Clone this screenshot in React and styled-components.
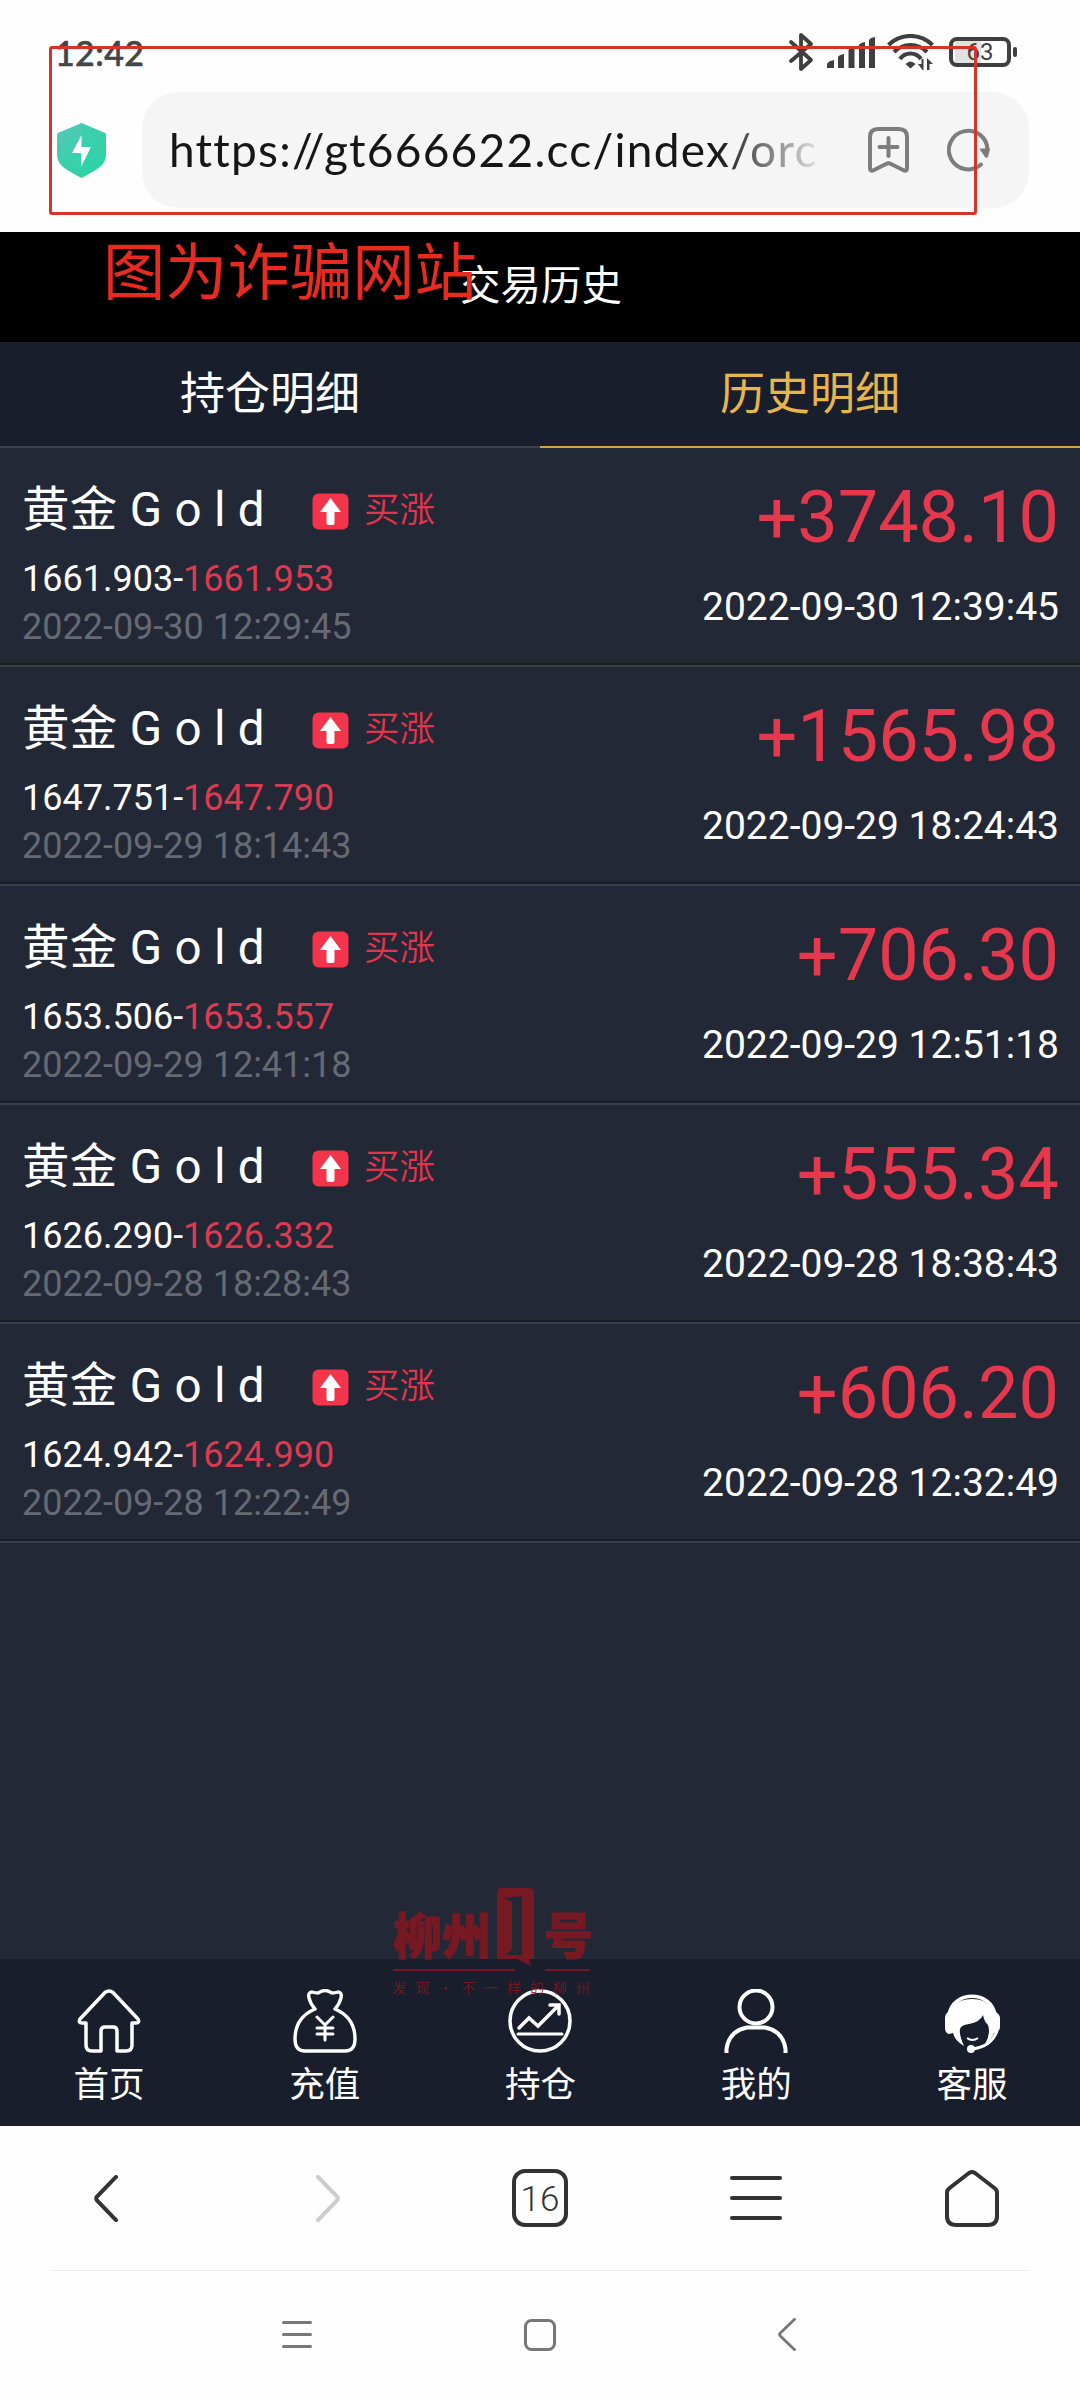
import React from "react";
import styled, { createGlobalStyle } from "styled-components";

const Global = createGlobalStyle`
  * { box-sizing: border-box; }
  body { margin: 0; background: #fefefe; }
  svg { display: block; flex: none; }
`;

const cjk = `Roboto, "Noto Sans CJK SC", sans-serif`;
const ui = `Lato, "Noto Sans CJK SC", sans-serif`;

const Screen = styled.div`
  position: relative;
  width: 1080px;
  height: 2400px;
  display: flex;
  flex-direction: column;
  overflow: hidden;
  background: #fefefe;
  font-family: ${cjk};
`;

const StatusBar = styled.div`
  height: 92px;
  padding: 12px 63px 0 55px;
  display: flex;
  justify-content: space-between;
  align-items: flex-start;
`;

const Clock = styled.span`
  font: 500 34px/82px ${ui};
  letter-spacing: 0.4px;
  color: #454545;
  -webkit-text-stroke: 0.6px #454545;
`;

const StatusIcons = styled.div`
  display: flex;
  align-items: center;
  height: 80px;
`;

const AddressRow = styled.div`
  height: 140px;
  padding: 0 51px 24px 57px;
  display: flex;
  align-items: center;
`;

const AddressBar = styled.div`
  flex: 1;
  height: 116px;
  margin-left: 36px;
  padding: 0 0 0 27px;
  border-radius: 36px;
  background: #f5f5f5;
  display: flex;
  align-items: center;
`;

const Url = styled.div`
  width: 652px;
  margin-right: 47px;
  overflow: hidden;
  white-space: nowrap;
  font: 400 46px/80px ${ui};
  letter-spacing: 1.25px;
  color: #161616;
  mask-image: linear-gradient(90deg, #000 84%, transparent 101%);
`;

const BarIcons = styled.div`
  display: flex;
  gap: 38px;
`;

const Header = styled.header`
  height: 110px;
  background: #000;
  color: #fff;
  text-align: center;
  font-size: 40.5px;
  line-height: 109px;
  padding-left: 2px;
`;

const Tabs = styled.div`
  height: 106px;
  display: flex;
  background: #191e2c;
`;

const Tab = styled.div`
  flex: 1;
  text-align: center;
  font-size: 45px;
  line-height: 106px;
  height: 106px;
  color: ${(p) => (p.$active ? "#e8b54c" : "#fff")};
  box-shadow: inset 0 -2px 0 ${(p) => (p.$active ? "#cfa648" : "#3c4047")};
`;

const List = styled.main`
  height: 1511px;
  background: #222836;
`;

const Row = styled.div`
  height: 219px;
  padding: 0 21px 0 22px;
  display: flex;
  justify-content: space-between;
  border-bottom: 2px solid #3b3d47;
  box-shadow: inset 0 -2px 0 #191c25;
`;

const Left = styled.div`
  display: flex;
  flex-direction: column;
  padding-top: 27px;
`;

const NameLine = styled.div`
  display: flex;
  align-items: center;
  height: 70px;
`;

const Name = styled.span`
  width: 290px;
  font-size: 47.5px;
  line-height: 70px;
  letter-spacing: 0.3px;
  color: #fff;
  white-space: pre;
`;

const Direction = styled.span`
  margin-left: 15px;
  font-size: 35.5px;
  font-weight: 350;
  line-height: 60px;
  color: #e3354c;
`;

const Prices = styled.div`
  margin-top: 13px;
  font-size: 36px;
  line-height: 42px;
  color: #fff;
`;

const Close = styled.span`
  color: #dc3a50;
`;

const Opened = styled.div`
  margin-top: 6px;
  font-size: 36px;
  line-height: 42px;
  color: #666a73;
`;

const Right = styled.div`
  display: flex;
  flex-direction: column;
  align-items: flex-end;
  padding-top: 28px;
`;

const Amount = styled.div`
  font-size: 72px;
  line-height: 84px;
  color: #e5384c;
`;

const Closed = styled.div`
  margin-top: 24px;
  font-size: 39px;
  line-height: 46px;
  color: #fff;
`;

const AppNav = styled.nav`
  height: 167px;
  padding: 30px 0 0 1px;
  display: grid;
  grid-template-columns: repeat(5, 1fr);
  background: #191e2c;
  border-bottom: 3px solid #1f1e2b;
`;

const NavItem = styled.div`
  display: flex;
  flex-direction: column;
  align-items: center;
  gap: 6px;
  font-size: 35.5px;
  line-height: 52px;
  color: #fff;
`;

const Toolbar = styled.div`
  height: 144px;
  display: grid;
  grid-template-columns: repeat(5, 1fr);
  place-items: center;
`;

const Nudge = styled.div`
  padding: ${(p) => p.$pad};
`;

const TabCount = styled.div`
  width: 56px;
  height: 58px;
  border: 4px solid #333;
  border-radius: 13px;
  text-align: center;
  font: 300 35px/53px Roboto, sans-serif;
  color: #333;
`;

const Rule = styled.div`
  height: 1px;
  margin: 0 51px;
  background: #e8e8e8;
`;

const SystemBar = styled.div`
  height: 129px;
  padding: 0 284px 2px 282px;
  display: flex;
  justify-content: space-between;
  align-items: center;
`;

const Frame = styled.div`
  position: absolute;
  left: 49px;
  top: 46px;
  width: 928px;
  height: 169px;
  border: 3px solid #d6332a;
  border-radius: 3px;
`;

const Caption = styled.div`
  position: absolute;
  left: 103px;
  top: 229px;
  font-size: 62.3px;
  line-height: 90px;
  color: #e92a20;
  white-space: nowrap;
`;

const Watermark = styled.div`
  position: absolute;
  left: 393px;
  top: 1887px;
  width: 197px;
  color: #8a1620;
  opacity: 0.82;
`;

const MarkLine = styled.div`
  height: 79px;
  display: flex;
  align-items: flex-end;
`;

const MarkText = styled.span`
  width: ${(p) => p.$w}px;
  margin-bottom: 8px;
  font: 900 49px/50px "Noto Sans CJK SC", sans-serif;
  white-space: nowrap;
  -webkit-text-stroke: 1px #8a1620;
`;

const MarkRules = styled.div`
  display: flex;
  justify-content: space-between;
  margin-top: 3px;
`;

const MarkRule = styled.i`
  height: 2px;
  width: ${(p) => p.$w}px;
  background: currentColor;
`;

const Motto = styled.div`
  display: flex;
  justify-content: space-between;
  margin-top: 6px;
  font: 400 14px/20px "Noto Sans CJK SC", sans-serif;
`;

const Line = (p) => (
  <g fill="none" stroke="#fff" strokeWidth="4" strokeLinecap="round" strokeLinejoin="round" {...p} />
);

const Bluetooth = () => (
  <svg width="26" height="40" viewBox="0 0 26 40">
    <path d="M3 10 23 28 13 37V3L23 12 3 29" fill="none" stroke="#3f3f3f" strokeWidth="3.8" strokeLinejoin="round" strokeLinecap="round" />
  </svg>
);

const Signal = () => (
  <svg width="48" height="31" viewBox="0 0 48 31" fill="#3f3f3f">
    <path d="M0 31v-4q1-3 7-4v8zM11 31V20q1-2 6-3v14zM21.500 31V13q1-2 6-3v21zM32 31V8q1-2 6-3v26zM42 31V3q1-2 5-3q1 0 1 1v30z" />
  </svg>
);

const Wifi = () => (
  <svg width="48" height="36" viewBox="0 0 48 36">
    <g fill="none" stroke="#3f3f3f" strokeWidth="4.200">
      <path d="M1.500 11Q11 2 23.500 2T45.500 11" />
      <path d="M7 18Q14 11 23.500 11T40 18" />
      <path d="M13 25Q17 19.500 23.500 19.500T34 25" />
    </g>
    <path d="M18.500 30q5-5 10 0l-5 4.500zM31 30h3.500v-5h2v11h-1zM40 36V24l6 6h-3.500v6z" fill="#3f3f3f" />
  </svg>
);

const BatteryBox = styled.div`
  width: 62px;
  height: 30px;
  border: 4px solid #3f3f3f;
  border-radius: 8px;
  background: linear-gradient(90deg, transparent 2px, #e2e2e2 2px, #e2e2e2 28px, transparent 28px);
  text-align: center;
  font: 400 24px/23px Roboto, sans-serif;
  color: #3f3f3f;
`;

const Nub = styled.i`
  width: 4px;
  height: 10px;
  margin-left: 2px;
  border-radius: 2px;
  background: #3f3f3f;
`;

const Space = styled.i`
  width: ${(p) => p.$w}px;
`;

const Shield = () => (
  <svg width="49" height="56" viewBox="0 0 49 56">
    <defs>
      <linearGradient id="sh" x1="0" y1="0" x2="0.4" y2="1">
        <stop offset="0" stopColor="#55c8b9" />
        <stop offset="1" stopColor="#2fd3a5" />
      </linearGradient>
    </defs>
    <path d="M24.500 1 48 11q1 0 1 2v19c0 12-10 16-24.500 24C10 48 0 44 0 32V13q0-2 1-2z" fill="url(#sh)" />
    <path d="M24.500 1 48 11q1 0 1 2v19c0 12-10 16-24.500 24z" fill="#27d5a4" opacity=".3" />
    <path d="M24.500 13 15 31h9v14L34 25h-9.500z" fill="#fff" />
  </svg>
);

const Bookmark = () => (
  <svg width="41" height="46" viewBox="0 0 41 46" fill="none" stroke="#7d7d7d" strokeWidth="4" strokeLinejoin="round" strokeLinecap="round">
    <path d="M2 41V10q0-8 8-8h21q8 0 8 8v31q0 4-4 2l-12-6q-2.500-1.500-5 0L6 43q-4 2-4-2zM20.500 11v18M11.500 20h18" />
  </svg>
);

const Reload = () => (
  <svg width="43" height="45" viewBox="0 0 43 45">
    <path d="M34 37.500A19.300 19.300 0 1 1 40.500 23" fill="none" stroke="#7d7d7d" strokeWidth="4" strokeLinecap="round" />
    <path d="M33 22h9.500l-2 8q-1 1-2 0z" fill="#7d7d7d" stroke="#7d7d7d" strokeLinejoin="round" />
  </svg>
);

const UpBadge = () => (
  <svg width="37" height="39" viewBox="0 -2 37 39">
    <rect width="36" height="36" x=".5" y=".5" rx="6" fill="#f3344a" />
    <path d="M18.500 5 29 19h-6.500v11q0 2-2 2h-4q-2 0-2-2V19H8z" fill="#fff" />
  </svg>
);

const HomeIcon = () => (
  <svg width="64" height="64" viewBox="0 0 64 64">
    <Line strokeWidth="3.500"><path d="M28 3.500 3 30q-2 4 2 4h4v22q0 6 6 6h9V42q0-4 4-4h8q4 0 4 4v20h9q6 0 6-6V34h4q4 0 2-4L36 3.500q-4-3-8 0z" /></Line>
  </svg>
);

const BagIcon = () => (
  <svg width="64" height="64" viewBox="0 0 64 64">
    <Line>
      <path d="M22 20C16 13 13 3 19 3q3 1 6 1 4-2.500 7-2.500t7 2.500q3 0 6-1c6 0 3 10-3 17M22 20C8 26 2 36 2 50q0 12 10 12h40q10 0 10-12C62 36 56 26 42 20" strokeWidth="3.400" />
      <path d="M24 28l8 8 8-8M32 36v15M24 39h16M24 45h16" strokeWidth="3" />
    </Line>
  </svg>
);

const ChartIcon = () => (
  <svg width="64" height="64" viewBox="0 0 64 64">
    <Line strokeWidth="3.500">
      <circle cx="32" cy="32" r="30" />
      <path d="M11 39 21 29l9 8 20-20M42 16h9v9" strokeLinejoin="miter" />
      <path d="M10 45h44" strokeWidth="3" />
    </Line>
  </svg>
);

const UserIcon = () => (
  <svg width="64" height="64" viewBox="0 0 64 64">
    <Line strokeLinecap="butt">
      <circle cx="32" cy="18" r="16.500" />
      <path d="M2.500 64v-4Q5 42 23 38.500h18Q59 42 61.500 60v4" />
    </Line>
  </svg>
);

const ServiceIcon = () => (
  <svg width="64" height="64" viewBox="0 0 64 64">
    <path d="M9 26C13 1 51 1 55 26" fill="none" stroke="#fff" strokeWidth="3.600" />
    <path d="M8 23h2q6-13 22-13t22 13h2q4 3 4 6v9q0 5-6 6-2 6-9 11 6-10 3-19-4-4-5-10-3 7-14 9-8 1-9 5-1 6 4 17-9-5-11-13l-4 1q-4-1-4-6V29q0-4 3-6z" fill="#fff" />
    <path d="M57 42q-6 16-25 18" fill="none" stroke="#fff" strokeWidth="3" />
    <circle cx="31" cy="60" r="4" fill="#fff" />
    <path d="M27 49q5.500 4 11 0" fill="none" stroke="#fff" strokeWidth="2" />
  </svg>
);

const Chevron = ({ w, h, color, sw, flip }) => (
  <svg width={w} height={h} viewBox="0 0 24 48" preserveAspectRatio="none">
    <path d={flip ? "M2 2 21 22q1.500 2 0 4L2 46" : "M22 2 3 22q-1.500 2 0 4L22 46"} fill="none" stroke={color} strokeWidth={sw} strokeLinecap="round" />
  </svg>
);

const Burger = ({ w, gap, sw, color }) => (
  <svg width={w} height={gap * 2 + sw} fill="none" stroke={color} strokeWidth={sw} strokeLinecap="round">
    {[0, 1, 2].map((i) => (
      <path key={i} d={`M${sw / 2} ${sw / 2 + i * gap}H${w - sw / 2}`} />
    ))}
  </svg>
);

const HouseOutline = () => (
  <svg width="54" height="57" viewBox="0 0 54 57">
    <path d="M24 3 4 18.500Q2 20 2 23v23q0 9 9 9h32q9 0 9-9V23q0-3-2-4.500L30 3q-3-2-6 0z" fill="none" stroke="#333" strokeWidth="4" strokeLinejoin="round" />
  </svg>
);

const Square = () => (
  <svg width="32" height="32" viewBox="0 0 32 32">
    <rect x="1.500" y="1.500" width="29" height="29" rx="6" fill="none" stroke="#777" strokeWidth="3" />
  </svg>
);

const DoorMark = () => (
  <svg width="48" height="79" viewBox="0 0 48 79">
    <path fillRule="evenodd" d="M5 1h28q5 0 5 5v66h-5l2 7-14-7H1V5q0-4 4-4zM9 11v1l7 3v48l-7 5h17V9z" fill="#8a1620" />
  </svg>
);

const records = [
  ["1661.903", "1661.953", "2022-09-30 12:29:45", "+3748.10", "2022-09-30 12:39:45"],
  ["1647.751", "1647.790", "2022-09-29 18:14:43", "+1565.98", "2022-09-29 18:24:43"],
  ["1653.506", "1653.557", "2022-09-29 12:41:18", "+706.30", "2022-09-29 12:51:18"],
  ["1626.290", "1626.332", "2022-09-28 18:28:43", "+555.34", "2022-09-28 18:38:43"],
  ["1624.942", "1624.990", "2022-09-28 12:22:49", "+606.20", "2022-09-28 12:32:49"],
];

const nav = [
  ["首页", HomeIcon],
  ["充值", BagIcon],
  ["持仓", ChartIcon],
  ["我的", UserIcon],
  ["客服", ServiceIcon],
];

export default function App() {
  return (
    <Screen>
      <Global />
      <StatusBar>
        <Clock>12:42</Clock>
        <StatusIcons>
          <Bluetooth />
          <Space $w={13} />
          <Signal />
          <Space $w={12} />
          <Wifi />
          <Space $w={14} />
          <BatteryBox>63</BatteryBox>
          <Nub />
        </StatusIcons>
      </StatusBar>
      <AddressRow>
        <Shield />
        <AddressBar>
          <Url>https://gt666622.cc/index/orc</Url>
          <BarIcons>
            <Bookmark />
            <Reload />
          </BarIcons>
        </AddressBar>
      </AddressRow>
      <Header>交易历史</Header>
      <Tabs>
        <Tab>持仓明细</Tab>
        <Tab $active>历史明细</Tab>
      </Tabs>
      <List>
        {records.map(([open, close, opened, amount, closed]) => (
          <Row key={opened}>
            <Left>
              <NameLine>
                <Name>黄金 G o l d</Name>
                <UpBadge />
                <Direction>买涨</Direction>
              </NameLine>
              <Prices>
                {open}-<Close>{close}</Close>
              </Prices>
              <Opened>{opened}</Opened>
            </Left>
            <Right>
              <Amount>{amount}</Amount>
              <Closed>{closed}</Closed>
            </Right>
          </Row>
        ))}
      </List>
      <AppNav>
        {nav.map(([label, Icon]) => (
          <NavItem key={label}>
            <Icon />
            <span>{label}</span>
          </NavItem>
        ))}
      </AppNav>
      <Toolbar>
        <Nudge $pad="0 5px 0 0">
          <Chevron w={24} h={47} color="#333" sw={4} />
        </Nudge>
        <Nudge $pad="0 0 0 7px">
          <Chevron w={24} h={47} color="#ccc" sw={4} flip />
        </Nudge>
        <TabCount>16</TabCount>
        <Burger w={52} gap={20} sw={4} color="#333" />
        <HouseOutline />
      </Toolbar>
      <Rule />
      <SystemBar>
        <Burger w={30} gap={12} sw={3} color="#777" />
        <Nudge $pad="0 10px 0 0">
          <Square />
        </Nudge>
        <Chevron w={18} h={33} color="#777" sw={4} />
      </SystemBar>
      <Frame />
      <Caption>图为诈骗网站</Caption>
      <Watermark>
        <MarkLine>
          <MarkText $w={103}>柳州</MarkText>
          <DoorMark />
          <MarkText $w={46}>号</MarkText>
        </MarkLine>
        <MarkRules>
          <MarkRule $w={122} />
          <MarkRule $w={45} />
        </MarkRules>
        <Motto>
          {[..."发现·不一样的柳州"].map((c, i) => (
            <span key={i}>{c}</span>
          ))}
        </Motto>
      </Watermark>
    </Screen>
  );
}
